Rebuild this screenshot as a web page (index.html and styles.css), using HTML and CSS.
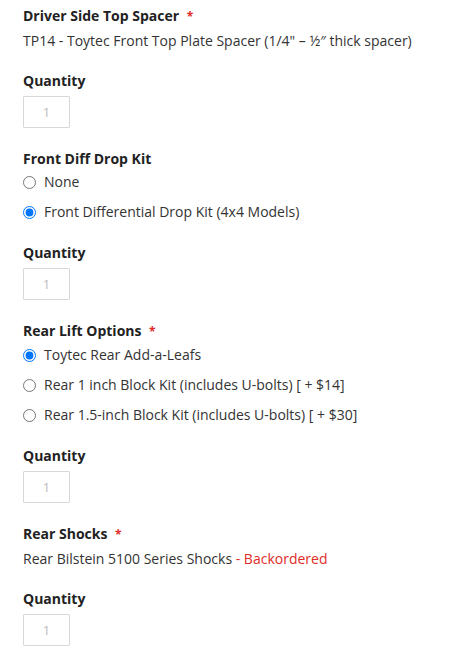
FILE: index.html
```html
<!DOCTYPE html>
<html>
<head>
<meta charset="utf-8">
<link rel="stylesheet" href="styles.css">
</head>
<body>
<div class="form">
  <div class="field">
    <div class="label">Driver Side Top Spacer <span class="req">*</span></div>
    <div class="text">TP14 - Toytec Front Top Plate Spacer (1/4" – ½″ thick spacer)</div>
  </div>
  <div class="qty">
    <div class="label">Quantity</div>
    <input class="qty-input" type="text" value="1">
  </div>

  <div class="field">
    <div class="label">Front Diff Drop Kit</div>
    <div class="options">
      <label class="opt"><input type="radio" name="diff"> <span>None</span></label>
      <label class="opt"><input type="radio" name="diff" checked> <span>Front Differential Drop Kit (4x4 Models)</span></label>
    </div>
  </div>
  <div class="qty">
    <div class="label">Quantity</div>
    <input class="qty-input" type="text" value="1">
  </div>

  <div class="field">
    <div class="label">Rear Lift Options <span class="req">*</span></div>
    <div class="options">
      <label class="opt"><input type="radio" name="rear" checked> <span>Toytec Rear Add-a-Leafs</span></label>
      <label class="opt"><input type="radio" name="rear"> <span>Rear 1 inch Block Kit (includes U-bolts) [ + $14]</span></label>
      <label class="opt"><input type="radio" name="rear"> <span>Rear 1.5-inch Block Kit (includes U-bolts) [ + $30]</span></label>
    </div>
  </div>
  <div class="qty">
    <div class="label">Quantity</div>
    <input class="qty-input" type="text" value="1">
  </div>

  <div class="field">
    <div class="label">Rear Shocks <span class="req">*</span></div>
    <div class="text">Rear Bilstein 5100 Series Shocks <span class="bo">- Backordered</span></div>
  </div>
  <div class="qty">
    <div class="label">Quantity</div>
    <input class="qty-input" type="text" value="1">
  </div>
</div>
</body>
</html>
```

FILE: styles.css
```css
html, body {
  margin: 0;
  padding: 0;
  background: #fff;
}
body {
  font-family: "Open Sans", "Noto Sans", sans-serif;
  font-size: 14px;
  color: #333;
}
.form {
  padding: 6px 23px 0 23px;
}
.label {
  font-weight: 700;
  color: #222;
  font-size: 14px;
  line-height: 20px;
}
.req {
  color: #e02b27;
  font-size: 12px;
  margin-left: 4px;
}
.text {
  margin-top: 4px;
  line-height: 20px;
  color: #333;
  font-size: 14px;
}
.bo {
  color: #e02b27;
}
.options {
  display: flex;
  flex-direction: column;
  gap: 10px;
  margin-top: 3px;
  padding-bottom: 1px;
}
.opt {
  display: flex;
  align-items: center;
  line-height: 20px;
  font-size: 14px;
}
.opt input {
  width: 13px;
  height: 13px;
  margin: 0 8px 0 0;
}
.field {
  margin-bottom: 20px;
}
.qty {
  margin-bottom: 21px;
}
.qty-input {
  display: block;
  box-sizing: border-box;
  width: 47px;
  height: 32px;
  margin-top: 5px;
  border: 1px solid #d8d8d8;
  border-radius: 1px;
  text-align: center;
  font-family: "Open Sans", sans-serif;
  font-size: 13px;
  color: #bbb;
  padding: 0;
  background: #fff;
}
```
